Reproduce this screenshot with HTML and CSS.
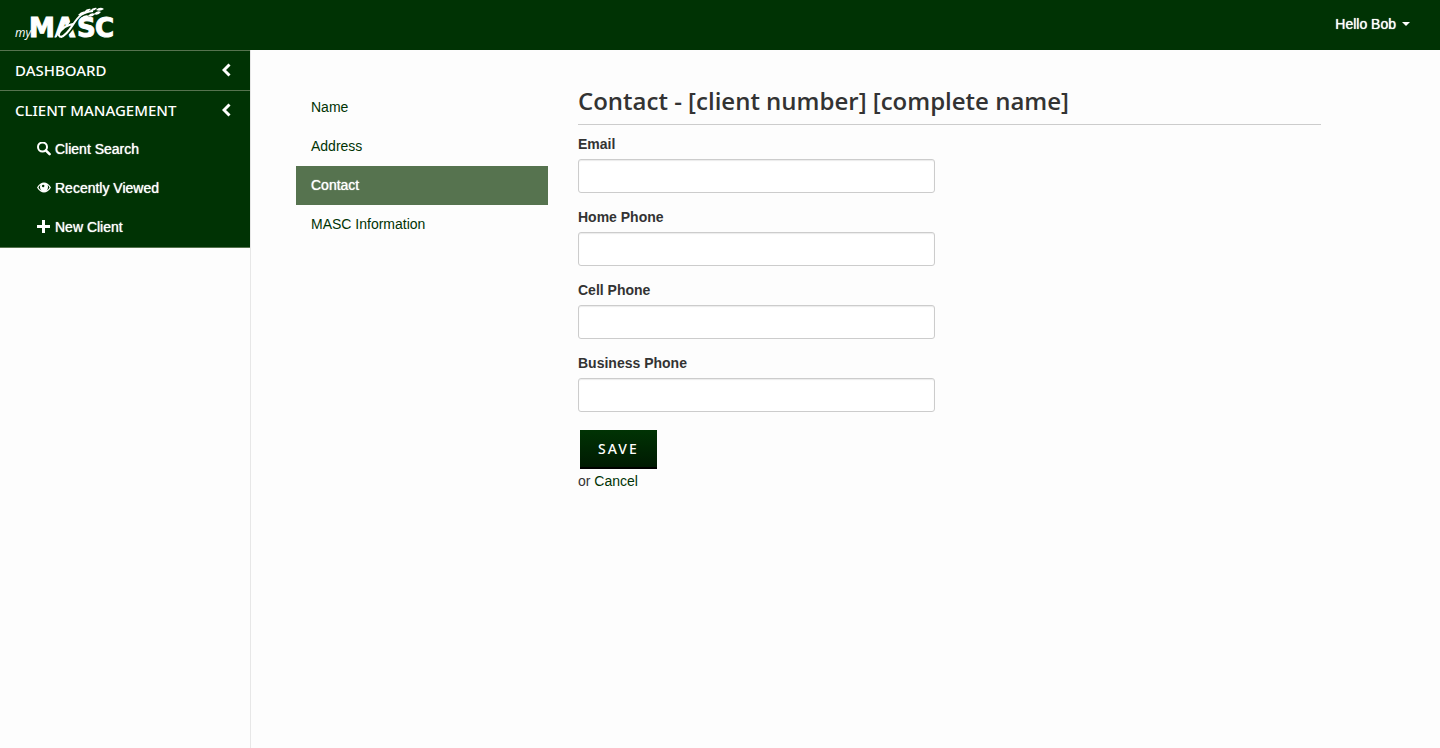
FILE: index.html
```html
<!DOCTYPE html>
<html lang="en">
<head>
<meta charset="utf-8">
<meta name="viewport" content="width=device-width, initial-scale=1">
<title>myMASC - Contact</title>
<link rel="stylesheet" href="styles.css">
</head>
<body>
<header class="navbar">
  <a class="brand" href="#" aria-label="myMASC">
    <svg class="logo" width="104" height="34" viewBox="0 0 104 34">
      <text class="logo-my" x="0" y="30">my</text>
      <text class="logo-masc" x="14 40 62 80" y="30">MASC</text>
      <path class="logo-cut" d="M41 31L48 31C56 28 60 20 62 13L57 11C54 18 50 22 45 25Z"/>
      <path class="logo-swoosh" d="M47 30C40 30 45 20 58 17M46 30C55 27 58 14 66 8Q70 5 78 4"/>
      <path class="logo-wheat" d="M63 8q4-5 8-3q-3 4-8 3ZM69 5q3-4 7-3q-3 4-7 3ZM75 4q3-4 7-3q-3 4-7 3ZM81 3q4-4 8-1q-4 3-8 1ZM66 11q4-4 8-2q-3 4-8 2ZM73 9q3-4 7-2q-3 4-7 2ZM79 7q3-4 7-2q-3 4-7 2Z"/>
    </svg>
  </a>
  <button class="user-menu" type="button">Hello Bob <span class="caret"></span></button>
</header>
<div class="layout">
  <aside class="sidebar">
    <nav class="menu" aria-label="Main">
      <a class="menu-head" href="#">DASHBOARD
        <svg class="chevron" width="9" height="14" viewBox="0 0 9 14"><path d="M7.5 1.5L2 7L7.5 12.5"/></svg></a>
      <a class="menu-head" href="#">CLIENT MANAGEMENT
        <svg class="chevron" width="9" height="14" viewBox="0 0 9 14"><path d="M7.5 1.5L2 7L7.5 12.5"/></svg></a>
      <a class="menu-item" href="#">
        <svg width="14" height="14" viewBox="0 0 14 14"><circle cx="5.5" cy="5" r="4.5" fill="none" stroke="#fff" stroke-width="2"/><path d="M8.8 8.3L12.6 12.1" stroke="#fff" stroke-width="2.6" stroke-linecap="round"/></svg>
        Client Search</a>
      <a class="menu-item" href="#">
        <svg width="14" height="14" viewBox="0 0 14 14"><path fill="#fff" fill-rule="evenodd" d="M0 6.500C2 3 4.500 1.500 7 1.500S12 3 14 6.500C12 10 9.500 11.500 7 11.500S2 10 0 6.500ZM1.500 6.500C2.500 8.800 4.500 10 7 10S11.500 8.800 12.500 6.500C12 5.200 11.300 4.500 10.600 4Q11 5 11 6A4 4 0 0 1 3 6Q3 5 3.400 4C2.700 4.500 2 5.200 1.500 6.500ZM5.400 4A1.300 1.300 0 0 0 6.500 6.300A1.300 1.300 0 0 0 7 4.100Q6.300 3.400 5.400 4Z"/></svg>
        Recently Viewed</a>
      <a class="menu-item" href="#">
        <svg width="14" height="14" viewBox="0 0 14 14"><path d="M5 0h3v5h5v3H8v5H5V8H0V5h5Z" fill="#fff"/></svg>
        New Client</a>
    </nav>
  </aside>
  <main class="main">
    <nav class="tabs" aria-label="Client sections">
      <a class="tab" href="#">Name</a>
      <a class="tab" href="#">Address</a>
      <a class="tab tab-active" href="#" aria-current="page">Contact</a>
      <a class="tab" href="#">MASC Information</a>
    </nav>
    <section class="content">
      <h1 class="title">Contact - [client number] [complete name]</h1>
      <form class="form">
        <div class="field"><label for="email">Email</label><input id="email" type="email"></div>
        <div class="field"><label for="home">Home Phone</label><input id="home" type="tel"></div>
        <div class="field"><label for="cell">Cell Phone</label><input id="cell" type="tel"></div>
        <div class="field"><label for="business">Business Phone</label><input id="business" type="tel"></div>
        <button class="save" type="submit">SAVE</button>
        <div>or <a class="cancel" href="#">Cancel</a></div>
      </form>
    </section>
  </main>
</div>
</body>
</html>
```
FILE: styles.css
```css
* { box-sizing: border-box; }
body {
  margin: 0;
  min-height: 100vh;
  display: flex;
  flex-direction: column;
  background: #fdfdfd;
  color: #333;
  font: 14px/20px "Liberation Sans", Arial, sans-serif;
}
a { color: #003304; text-decoration: none; }
.navbar {
  display: flex;
  justify-content: space-between;
  align-items: center;
  height: 50px;
  padding: 0 30px 2px 15px;
  background: #003304;
}
.brand { display: flex; }
.logo { fill: #fff; overflow: visible; }
.logo-my { font: italic 12px "Open Sans", sans-serif; }
.logo-masc { font: bold 26px "DejaVu Sans", sans-serif; stroke: #fff; stroke-width: 1; }
.logo-cut { fill: #003304; }
.logo-swoosh { fill: none; stroke: #fff; stroke-width: 2; }
.user-menu {
  display: flex;
  align-items: center;
  gap: 6px;
  padding: 0;
  border: 0;
  background: none;
  color: #fff;
  font: inherit;
  text-shadow: 0 0 1px #fff;
}
.caret {
  border: 4px solid transparent;
  border-top-color: #fff;
  border-bottom: 0;
}
.layout { display: flex; flex: 1; }
.sidebar { width: 251px; flex: none; border-right: 1px solid #e7e7e7; }
.menu { background: #003304; border-bottom: 1px solid #56734f; }
.menu-head {
  display: flex;
  justify-content: space-between;
  align-items: center;
  height: 40px;
  padding: 0 19px 2px 15px;
  border-top: 1px solid #56734f;
  color: #fff;
  font: 500 15px/20px "Noto Sans", sans-serif;
}
.chevron { fill: none; stroke: #fff; stroke-width: 3; }
.menu-item {
  display: flex;
  align-items: center;
  gap: 4px;
  height: 39px;
  padding: 0 15px 2px 37px;
  color: #fff;
  text-shadow: 0 0 1px #fff;
}
.main {
  flex: 1;
  display: grid;
  grid-template-columns: 252fr 743fr;
  gap: 30px;
  align-items: start;
  padding: 38px 119px 30px 45px;
}
.tab { display: block; padding: 9px 15px 10px; }
.tab-active { background: #56734f; color: #fff; text-shadow: 0 0 1px #fff; }
.title {
  margin: 0 0 9px;
  padding-bottom: 10px;
  border-bottom: 1px solid #ccc;
  font: 600 24px/26px "Open Sans", sans-serif;
}
.field { margin-bottom: 14px; }
.field label { display: block; margin-bottom: 5px; font-weight: bold; }
.field input {
  display: block;
  width: calc(50% - 15px);
  height: 34px;
  padding: 6px 12px;
  border: 1px solid #ccc;
  border-radius: 3px;
  background: #fff;
  box-shadow: inset 0 1px 1px rgba(0, 0, 0, .08);
  font: inherit;
}
.save {
  display: block;
  margin: 18px 2px 2px;
  padding: 9px 18px 8px;
  border: 0;
  border-bottom: 2px solid #000;
  background: linear-gradient(#003304, #001a02);
  color: #fff;
  font: 500 14px/20px "Noto Sans", sans-serif;
  letter-spacing: 2px;
}
```
